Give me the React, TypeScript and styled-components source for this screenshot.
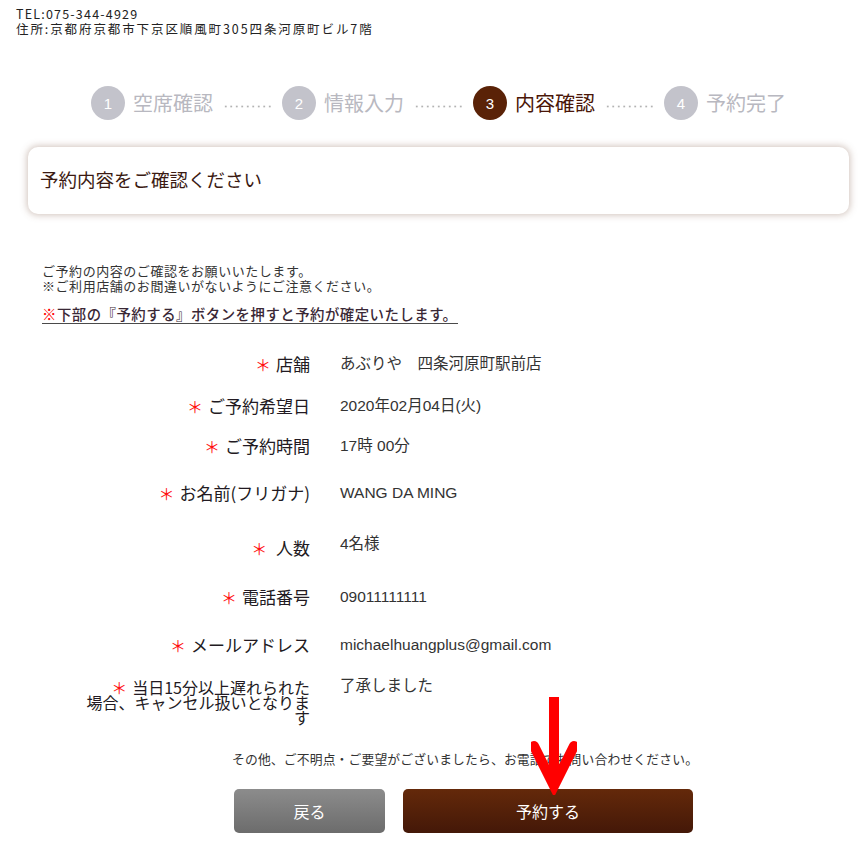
import React from "react";
import styled, { createGlobalStyle } from "styled-components";

const Global = createGlobalStyle`
  html, body { margin: 0; padding: 0; background: #fff; }
  body { font-family: "Noto Sans CJK JP", "Noto Sans", sans-serif; color: #333; }
`;

const Page = styled.div`
  position: relative;
  width: 861px;
  height: 845px;
  overflow: hidden;
`;

const Info = styled.div`
  padding: 6px 0 0 16px;
  font-size: 12.5px;
  line-height: 15px;
  color: #222;
`;

const InfoLine = styled.div<{ $spacing: number }>`
  letter-spacing: ${(p) => p.$spacing}px;
`;

const Steps = styled.div`
  display: flex;
  align-items: center;
  margin-top: 50px;
  padding-left: 91px;
  height: 34px;
`;

const Circle = styled.div<{ $active?: boolean }>`
  width: 34px;
  height: 34px;
  border-radius: 50%;
  background: ${(p) => (p.$active ? "#5a2207" : "#c3c3cb")};
  color: #fff;
  display: flex;
  align-items: center;
  justify-content: center;
  font-size: 15px;
  font-family: "Liberation Sans", sans-serif;
  flex: none;
`;

const StepLabel = styled.span<{ $active?: boolean }>`
  margin-left: 8px;
  font-size: 20px;
  line-height: 34px;
  width: 81px;
  white-space: nowrap;
  color: ${(p) => (p.$active ? "#4a1608" : "#b8b8c0")};
`;

const Dots = styled.span`
  width: 50px;
  height: 3px;
  margin: 6px 9px 0 9px;
  background-image: radial-gradient(circle, #b3b3b3 0.9px, transparent 1.2px);
  background-size: 5.5px 3px;
  background-repeat: repeat-x;
  flex: none;
`;

const Card = styled.div`
  margin: 27px 12px 0 28px;
  height: 67px;
  border-radius: 10px;
  background: #fff;
  box-shadow: 0 0 7px 1px rgba(120, 80, 60, 0.35);
  display: flex;
  align-items: center;
  padding: 0 0 4px 12px;
  box-sizing: border-box;
  font-size: 18.5px;
  color: #3b1a12;
`;

const Intro = styled.div`
  margin: 49px 0 0 42px;
  font-size: 13px;
  line-height: 15px;
  letter-spacing: 0.55px;
  color: #333;
`;

const Notice = styled.div`
  display: inline-block;
  margin: 12px 0 0 42px;
  font-size: 14.4px;
  line-height: 18px;
  letter-spacing: 0.5px;
  font-weight: 500;
  color: #3a2836;
  border-bottom: 1.5px solid #4a4a4a;
`;

const Red = styled.span`
  color: #ff0000;
`;

const Table = styled.div`
  margin-top: 27px;
`;

const Row = styled.div<{ $gap: number }>`
  display: grid;
  grid-template-columns: 228px 1fr;
  column-gap: 30px;
  padding-left: 82px;
  margin-top: ${(p) => p.$gap}px;
`;

const Label = styled.div<{ $multi?: boolean }>`
  text-align: right;
  font-size: ${(p) => (p.$multi ? "16px" : "17px")};
  line-height: ${(p) => (p.$multi ? "15px" : "24px")};
  color: #221a22;
`;

const Star = styled.span`
  color: #ff1010;
  font-size: 16px;
  margin-right: 5px;
`;

const Value = styled.div<{ $up?: number }>`
  font-family: "Liberation Sans", "Noto Sans CJK JP", sans-serif;
  font-size: 15.5px;
  line-height: 24px;
  color: #333;
  margin-top: ${(p) => (p.$up ? -p.$up : 0)}px;
`;

const Footer = styled.div`
  margin-top: 25px;
  padding-left: 232px;
  font-size: 12.8px;
  line-height: 18px;
  letter-spacing: 0.15px;
  color: #333;
`;

const Buttons = styled.div`
  display: flex;
  gap: 18px;
  margin-top: 21px;
  padding-left: 234px;
`;

const Button = styled.button<{ $primary?: boolean }>`
  height: 44px;
  width: ${(p) => (p.$primary ? 290 : 151)}px;
  border: none;
  border-radius: 5px;
  color: #fff;
  font-family: "Noto Sans CJK JP", sans-serif;
  font-size: 16px;
  background: ${(p) =>
    p.$primary
      ? "linear-gradient(#64290a, #441808)"
      : "linear-gradient(#8c8c8c, #6c6c6c)"};
  cursor: pointer;
`;

const Arrow = styled.svg`
  position: absolute;
  left: 531px;
  top: 695px;
`;

const stepsData = [
  { n: 1, t: "空席確認" },
  { n: 2, t: "情報入力" },
  { n: 3, t: "内容確認", active: true },
  { n: 4, t: "予約完了" },
];

const rows: { label: string; value: string; gap: number; up?: number }[] = [
  { label: "店舗", value: "あぶりや　四条河原町駅前店", gap: 0 },
  { label: "ご予約希望日", value: "2020年02月04日(火)", gap: 18 },
  { label: "ご予約時間", value: "17時 00分", gap: 16 },
  { label: "お名前(フリガナ)", value: "WANG DA MING", gap: 23 },
  { label: " 人数", value: "4名様", gap: 31, up: 4 },
  { label: "電話番号", value: "09011111111", gap: 25 },
  { label: "メールアドレス", value: "michaelhuangplus@gmail.com", gap: 24 },
];

export default function App() {
  return (
    <Page>
      <Global />
      <Info>
        <InfoLine $spacing={1.2}>TEL:075-344-4929</InfoLine>
        <InfoLine $spacing={1.9}>住所:京都府京都市下京区順風町305四条河原町ビル7階</InfoLine>
      </Info>
      <Steps>
        {stepsData.map((s, i) => (
          <React.Fragment key={s.n}>
            <Circle $active={s.active}>{s.n}</Circle>
            <StepLabel $active={s.active}>{s.t}</StepLabel>
            {i < stepsData.length - 1 && <Dots />}
          </React.Fragment>
        ))}
      </Steps>
      <Card>予約内容をご確認ください</Card>
      <Intro>
        <div>ご予約の内容のご確認をお願いいたします。</div>
        <div>※ご利用店舗のお間違いがないようにご注意ください。</div>
      </Intro>
      <Notice>
        <Red>※</Red>下部の『予約する』ボタンを押すと予約が確定いたします。
      </Notice>
      <Table>
        {rows.map((r) => (
          <Row key={r.label} $gap={r.gap}>
            <Label>
              <Star>＊</Star>
              {r.label}
            </Label>
            <Value $up={r.up}>{r.value}</Value>
          </Row>
        ))}
        <Row $gap={23}>
          <Label $multi>
            <Star>＊</Star>当日15分以上遅れられた
            <br />
            場合、キャンセル扱いとなります
          </Label>
          <Value $up={6}>了承しました</Value>
        </Row>
      </Table>
      <Footer>その他、ご不明点・ご要望がございましたら、お電話でお問い合わせください。</Footer>
      <Buttons>
        <Button>戻る</Button>
        <Button $primary>予約する</Button>
      </Buttons>
      <Arrow width="46" height="100" viewBox="0 0 46 100">
        <line x1="23" y1="2" x2="23" y2="86" stroke="#ff0000" strokeWidth="10" />
        <polyline
          points="3,51 23,91 43,51"
          fill="none"
          stroke="#ff0000"
          strokeWidth="10"
          strokeLinecap="round"
          strokeLinejoin="miter"
        />
      </Arrow>
    </Page>
  );
}
